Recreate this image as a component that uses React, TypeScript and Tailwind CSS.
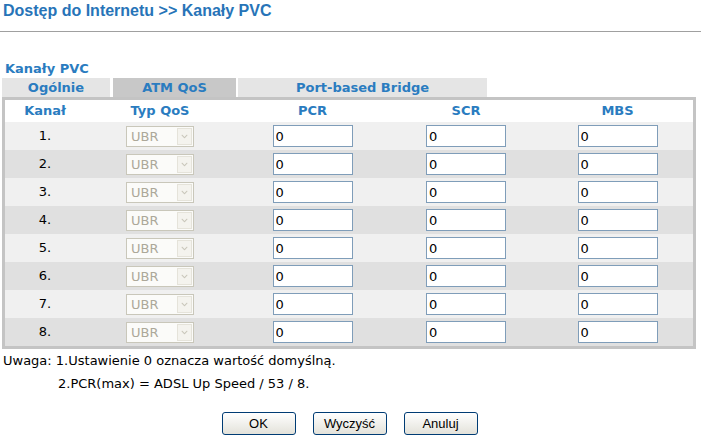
import { FaChevronDown } from "react-icons/fa";

const rows = [1, 2, 3, 4, 5, 6, 7, 8];

const UbrSelect = () => (
  <div className="mx-auto flex h-[21px] w-[68px] items-center border border-[#c9c7ba] bg-[#fbfbf9] p-[1px]">
    <span className="flex-1 pl-[3px] text-[13px] leading-none text-[#aca899]">UBR</span>
    <span className="flex h-[17px] w-[15px] items-center justify-center border border-[#e5e3da] bg-[#f4f3ee]">
      <FaChevronDown className="h-[7px] w-[7px] text-[#c9c7ba]" />
    </span>
  </div>
);

const NumInput = () => (
  <input
    readOnly
    value="0"
    className="mx-auto block h-[22px] w-[80px] border border-[#7f9db9] bg-white px-[2px] text-[13px] text-black outline-none"
  />
);

const Btn = ({ label }: { label: string }) => (
  <button className="h-[23px] w-[74px] rounded-[3px] border border-[#003c74] bg-gradient-to-b from-white to-[#e3e2da] text-[13px] text-black">
    {label}
  </button>
);

export default function App() {
  return (
    <div className="w-[701px] bg-white font-['DejaVu_Sans',sans-serif] text-black">
      <h1 className="px-[3px] pt-[1px] font-['Liberation_Sans',sans-serif] text-[16px] leading-[20px] font-bold text-[#2774b8]">
        Dostęp do Internetu &gt;&gt; Kanały PVC
      </h1>
      <div className="mt-[10px] h-px w-full bg-[#a0a0a0]" />

      <div className="mt-[28px] px-[5px] text-[13px] leading-[18px] font-bold text-[#2a7cc0]">Kanały PVC</div>

      <div className="ml-[2px] flex text-[13px] font-bold text-[#2a7cc0]">
        <div className="flex h-[19px] w-[108px] items-center justify-center bg-[#e5e5e5]">Ogólnie</div>
        <div className="ml-[3px] flex h-[19px] w-[123px] items-center justify-center bg-[#c8c8c8]">ATM QoS</div>
        <div className="ml-[2px] flex h-[19px] w-[249px] items-center justify-center bg-[#e5e5e5]">Port-based Bridge</div>
      </div>

      <div className="ml-[2px] w-[694px] border-[3px] border-[#c4c4c4]">
        <div className="grid h-[22px] grid-cols-[80px_150px_155px_152px_1fr] items-center text-center text-[13px] font-bold text-[#2a7cc0]">
          <div>Kanał</div>
          <div>Typ QoS</div>
          <div>PCR</div>
          <div>SCR</div>
          <div>MBS</div>
        </div>
        {rows.map((n) => (
          <div
            key={n}
            className={`grid h-[28px] grid-cols-[80px_150px_155px_152px_1fr] items-center text-[13px] ${
              n % 2 ? "bg-[#f0f0f0]" : "bg-[#e0e0e0]"
            }`}
          >
            <div className="text-center">{n}.</div>
            <UbrSelect />
            <NumInput />
            <NumInput />
            <NumInput />
          </div>
        ))}
      </div>

      <div className="px-[3px] text-[13px] leading-[23px]">
        <div>Uwaga: 1.Ustawienie 0 oznacza wartość domyślną.</div>
        <div className="pl-[55px]">2.PCR(max) = ADSL Up Speed / 53 / 8.</div>
      </div>

      <div className="mt-[17px] flex justify-center gap-[17px] pr-[2px] font-['Liberation_Sans',sans-serif]">
        <Btn label="OK" />
        <Btn label="Wyczyść" />
        <Btn label="Anuluj" />
      </div>
    </div>
  );
}
